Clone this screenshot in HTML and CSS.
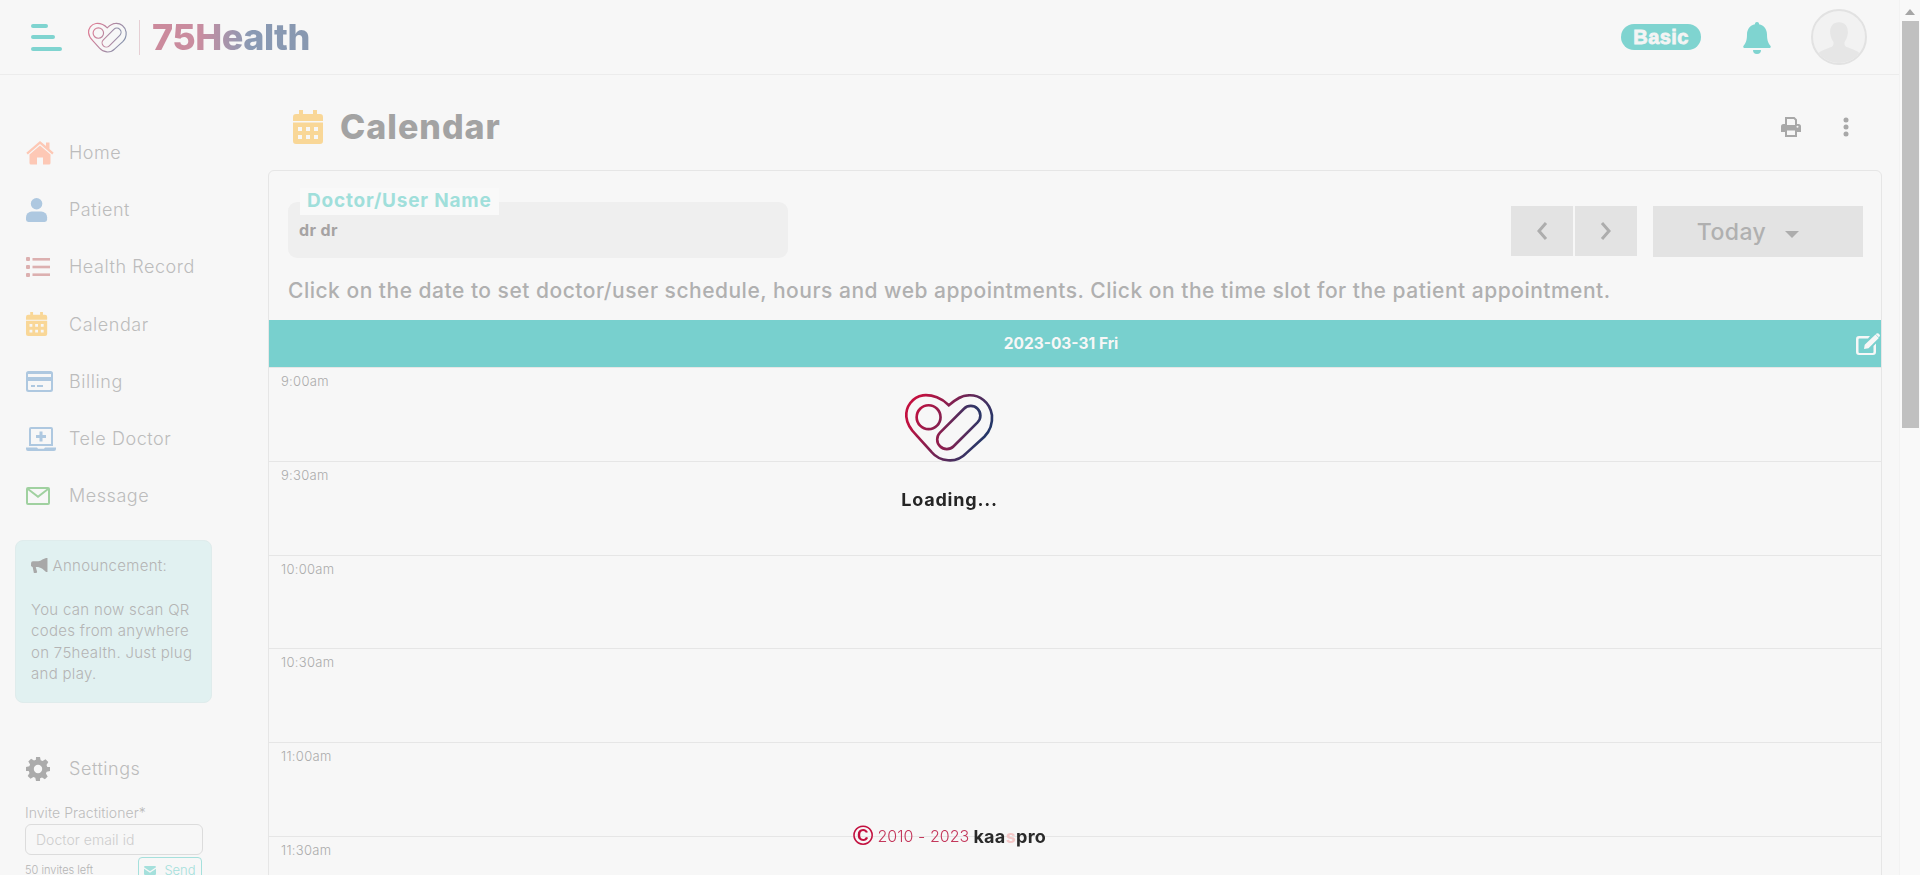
FILE: index.html
```html
<!DOCTYPE html>
<html lang="en">
<head>
<meta charset="utf-8">
<title>75Health - Calendar</title>
<link rel="stylesheet" href="styles.css">
</head>
<body>
<svg class="defs" width="0" height="0" aria-hidden="true">
  <defs>
    <linearGradient id="hg" gradientUnits="userSpaceOnUse" x1="170" y1="100" x2="390" y2="210">
      <stop offset="0" stop-color="#c2103f"/><stop offset="1" stop-color="#1b3a6b"/>
    </linearGradient>
    <symbol id="heart" viewBox="130 65 280 220">
      <g fill="none" stroke="url(#hg)" stroke-width="8">
        <path d="M268 105C248 84 218 72 190 75C158 80 137 110 140 140C142 165 155 180 170 195L215 245C240 275 290 282 320 250L375 200C395 180 400 160 398 135C392 95 360 72 325 75C305 75 285 90 268 105Z"/>
        <circle cx="207" cy="141" r="36"/>
        <rect x="218" y="143" width="160" height="58" rx="29" transform="rotate(-45 298 172)"/>
      </g>
    </symbol>
    <symbol id="cal" viewBox="0 0 30 34" preserveAspectRatio="xMinYMid meet">
      <path fill-rule="evenodd" d="M6 0h4v4h10V0h4v4h3a3 3 0 0 1 3 3v4H0V7a3 3 0 0 1 3-3h3ZM0 12.500h30V31a3 3 0 0 1-3 3H3a3 3 0 0 1-3-3ZM5 17v4h4v-4Zm8 0v4h4v-4Zm8 0v4h4v-4ZM5 25v4h4v-4Zm8 0v4h4v-4Zm8 0v4h4v-4Z"/>
    </symbol>
  </defs>
</svg>

<header class="topbar">
  <div class="hamburger"><span class="l1"></span><span class="l2"></span><span class="l3"></span></div>
  <svg class="brand-mark"><use href="#heart"/></svg>
  <span class="brand-sep"></span>
  <span class="brand-name">75Health</span>
  <div class="top-right">
    <span class="plan">Basic</span>
    <svg class="bell" viewBox="0 0 28 32"><path d="M14 0a2 2 0 0 1 2 2.300C21 3.300 24 7.500 24 12.500c0 7 2 9.500 3.400 11.200.6.700.6 2.300-1 2.300H1.600c-1.600 0-1.600-1.600-1-2.300C2 22 4 19.500 4 12.500 4 7.500 7 3.300 12 2.300A2 2 0 0 1 14 0ZM10 28h8a4 4 0 0 1-8 0Z"/></svg>
    <span class="avatar">
      <svg viewBox="0 0 56 56"><path d="M28 12c7 0 10 5 9.500 12-.3 4-2 7-3.500 9.500-.5 3 .5 4.500 3 5.500 6 2.300 11 3.500 14 7.500A26 26 0 0 1 5 46.500c3-4 8-5.200 14-7.500 2.500-1 3.500-2.500 3-5.500-1.500-2.500-3.200-5.500-3.500-9.500C18 17 21 12 28 12Z"/></svg>
    </span>
  </div>
</header>

<div class="shell">
  <aside class="sidebar">
    <nav class="nav">
      <a class="nav-item">
        <svg class="ic ic-home" viewBox="0 0 28 24" preserveAspectRatio="xMinYMid meet"><path d="M14 4.500 3.500 13.500V22a1.500 1.500 0 0 0 1.500 1.500h6v-7h6v7h6a1.500 1.500 0 0 0 1.500-1.500v-8.500ZM14 0 .3 11.700l1.500 1.800L14 3l12.200 10.500 1.500-1.800L23.500 8V1.500h-3.500v3.500Z"/></svg>
        <span>Home</span>
      </a>
      <a class="nav-item">
        <svg class="ic ic-user" viewBox="0 0 22 25" preserveAspectRatio="xMinYMid meet"><circle cx="11" cy="6" r="6"/><path d="M6 14h10a6 6 0 0 1 6 6v2.500a2.500 2.500 0 0 1-2.500 2.500h-17A2.500 2.500 0 0 1 0 22.500V20a6 6 0 0 1 6-6Z"/></svg>
        <span>Patient</span>
      </a>
      <a class="nav-item">
        <svg class="ic ic-list" viewBox="0 0 24 20" preserveAspectRatio="xMinYMid meet"><rect width="4" height="4" rx="1"/><rect y="8" width="4" height="4" rx="1"/><rect y="16" width="4" height="4" rx="1"/><rect x="6.500" y="1" width="17.500" height="2.600"/><rect x="6.500" y="8.700" width="17.500" height="2.600"/><rect x="6.500" y="16.400" width="17.500" height="2.600"/></svg>
        <span>Health Record</span>
      </a>
      <a class="nav-item">
        <svg class="ic ic-cal"><use href="#cal"/></svg>
        <span>Calendar</span>
      </a>
      <a class="nav-item">
        <svg class="ic ic-card" viewBox="0 0 27 21" preserveAspectRatio="xMinYMid meet"><path fill-rule="evenodd" d="M2.500 0h22A2.500 2.500 0 0 1 27 2.500v16a2.500 2.500 0 0 1-2.500 2.500h-22A2.500 2.500 0 0 1 0 18.500v-16A2.500 2.500 0 0 1 2.500 0ZM2 3v3h23V3ZM2 10v8a1 1 0 0 0 1 1h21a1 1 0 0 0 1-1v-8ZM5 14h4v2H5Zm6 0h6v2h-6Z"/></svg>
        <span>Billing</span>
      </a>
      <a class="nav-item">
        <svg class="ic ic-tele" viewBox="0 0 30 24" preserveAspectRatio="xMinYMid meet"><path fill-rule="evenodd" d="M5 0h20a2 2 0 0 1 2 2v17H3V2a2 2 0 0 1 2-2Zm0 2v15h20V2ZM13.500 4.500h3v3.500H20v3h-3.500v3.500h-3V11H10V8h3.500ZM0 20.500h11l1 1.300h6l1-1.300h11V22a2 2 0 0 1-2 2H2a2 2 0 0 1-2-2Z"/></svg>
        <span>Tele Doctor</span>
      </a>
      <a class="nav-item">
        <svg class="ic ic-msg" viewBox="0 0 24 18" preserveAspectRatio="xMinYMid meet"><path fill-rule="evenodd" d="M2 0h20a2 2 0 0 1 2 2v14a2 2 0 0 1-2 2H2a2 2 0 0 1-2-2V2a2 2 0 0 1 2-2Zm0 3.300V16h20V3.300l-10 7.800ZM3.500 2 12 8.500 20.500 2Z"/></svg>
        <span>Message</span>
      </a>
    </nav>

    <section class="announce">
      <p class="announce-head">
        <svg viewBox="0 0 18 16"><path d="M16 0h1.500v15H16l-4-3.500c-2-1.500-4-2-6-2H5l1.500 5.500-.8 1H3L1.700 9.500A2 2 0 0 1 0 7V5.500a2 2 0 0 1 2-2h4c2 0 4-.5 6-2Z"/></svg>
        Announcement:
      </p>
      <p>You can now scan QR codes from anywhere on 75health. Just plug and play.</p>
    </section>

    <a class="nav-item settings">
      <svg class="ic ic-cog" viewBox="0 0 24 24"><path fill-rule="evenodd" d="M10 0h4l.7 3.300 1.900.8 2.900-1.800 2.800 2.800-1.800 2.900.8 1.900L24 10v4l-3.300.7-.8 1.900 1.800 2.900-2.800 2.800-2.900-1.800-1.900.8L14 24h-4l-.7-3.300-1.900-.8-2.900 1.800-2.800-2.800 1.800-2.900-.8-1.900L0 14v-4l3.300-.7.8-1.900-1.800-2.900 2.800-2.800 2.900 1.800 1.900-.8ZM12 7.800a4.200 4.200 0 1 0 0 8.400 4.200 4.200 0 0 0 0-8.400Z"/></svg>
      <span>Settings</span>
    </a>

    <form class="invite">
      <label class="invite-label">Invite Practitioner*</label>
      <div class="invite-input">Doctor email id</div>
      <div class="invite-foot">
        <span class="invite-left">50 invites left</span>
        <span class="send">
          <svg viewBox="0 0 16 12"><path d="M0 1.500A1.500 1.500 0 0 1 1.500 0h13A1.500 1.500 0 0 1 16 1.500L8 7 0 1.500ZM0 3.500V10.500A1.500 1.500 0 0 0 1.500 12h13a1.500 1.500 0 0 0 1.500-1.500v-7L8 9Z"/></svg>
          Send
        </span>
      </div>
    </form>
  </aside>

  <main class="content">
    <div class="page-head">
      <svg class="page-ic"><use href="#cal"/></svg>
      <h1>Calendar</h1>
      <div class="page-tools">
        <svg class="print" viewBox="0 0 20 20"><path fill-rule="evenodd" d="M4 0h9.500L16 2.500V7h1.500A2.500 2.500 0 0 1 20 9.500V15h-4v5H4v-5H0V9.500A2.500 2.500 0 0 1 2.500 7H4Zm2 2v6h8V3.300L12.700 2ZM6 13.500V18h8v-4.500Zm10.500-4.700a1 1 0 1 0 0 2 1 1 0 0 0 0-2Z"/></svg>
        <svg class="kebab" viewBox="0 0 6 20"><circle cx="3" cy="3" r="2.500"/><circle cx="3" cy="10" r="2.500"/><circle cx="3" cy="17" r="2.500"/></svg>
      </div>
    </div>

    <section class="card">
      <div class="card-top">
        <div class="toolbar">
          <div class="field">
            <span class="field-label">Doctor/User Name</span>
            <span class="field-value">dr dr</span>
          </div>
          <div class="controls">
            <button class="btn btn-nav" type="button"><svg viewBox="0 0 12 20"><path d="M10 2 3 10l7 8" /></svg></button>
            <button class="btn btn-nav" type="button"><svg viewBox="0 0 12 20"><path d="m2 2 7 8-7 8" /></svg></button>
            <button class="btn btn-today" type="button">Today <span class="caret"></span></button>
          </div>
        </div>
        <p class="hint">Click on the date to set doctor/user schedule, hours and web appointments. Click on the time slot for the patient appointment.</p>
      </div>

      <div class="date-bar">
        <span>2023-03-31 Fri</span>
        <svg class="edit" viewBox="0 0 24 22"><path fill-rule="evenodd" d="M3 3h11l-2 2.400H3.500a1 1 0 0 0-1 1V19a1 1 0 0 0 1 1h13a1 1 0 0 0 1-1v-6l2.500-2.500V19a3 3 0 0 1-3 3H3a3 3 0 0 1-3-3V6a3 3 0 0 1 3-3Z"/><path d="M19.500 1.500 22.800 5 12.500 15.300 8 16l.7-4.300ZM20.500.6a1.500 1.500 0 0 1 2 0l1 1a1.500 1.500 0 0 1 0 2l-.7.700-3-3Z"/></svg>
      </div>

      <div class="slots">
        <div class="slot">9:00am</div>
        <div class="slot">9:30am</div>
        <div class="slot">10:00am</div>
        <div class="slot">10:30am</div>
        <div class="slot">11:00am</div>
        <div class="slot">11:30am</div>
      </div>
    </section>
  </main>
</div>

<div class="loader">
  <svg class="loader-mark"><use href="#heart"/></svg>
  <strong>Loading...</strong>
</div>

<footer class="copy">
  <span class="copy-mark">©</span>
  <span>2010 - 2023</span>
  <b>kaa<i>s</i>pro</b>
</footer>

<div class="scrollbar" aria-hidden="true">
  <span class="scroll-arrow"></span>
  <span class="scroll-thumb"></span>
</div>
</body>
</html>
```

FILE: styles.css
```css
* { box-sizing: border-box; }

html { background: #f7f7f7; overflow: hidden; }

body {
  margin: 0;
  padding-right: 21px;
  font-family: Inter, "Open Sans", "Liberation Sans", sans-serif;
  color: #b8b8b8;
  background: #f7f7f7;
}

.defs { position: absolute; }

/* window scrollbar */
.scrollbar {
  position: fixed;
  top: 0; right: 0; bottom: 0;
  width: 21px;
  padding: 9px 2px 0;
  background: #f9f9f9;
  border-left: 1px solid #f2f2f2;
  display: flex;
  flex-direction: column;
  align-items: center;
}
.scroll-arrow {
  width: 0; height: 0;
  border: 5px solid transparent;
  border-top: 0;
  border-bottom: 6px solid #a6a6a6;
  margin-bottom: 6px;
}
.scroll-thumb { width: 17px; height: 407px; background: #c0c0c0; }

/* top bar */
.topbar {
  height: 75px;
  display: flex;
  align-items: center;
  padding: 0 32px 0 31px;
  border-bottom: 1px solid #ececec;
}
.hamburger { width: 31px; display: flex; flex-direction: column; gap: 7.500px; margin-right: 25px; }
.hamburger span { display: block; height: 4px; border-radius: 2px; background: #7fd4d0; }
.hamburger .l1 { width: 17px; }
.hamburger .l2 { width: 24px; }
.hamburger .l3 { width: 31px; }
.brand-mark { width: 41px; height: 32px; opacity: .52; margin-top: 1px; }
.brand-sep { width: 1px; height: 35px; background: #e6cfd4; margin: 0 12px 0 11px; }
.brand-name {
  font-size: 36px;
  line-height: 1;
  font-weight: 800;
  letter-spacing: -.5px;
  background: linear-gradient(90deg, #cc8a9c 0%, #c98da0 30%, #8a9ab4 62%, #8898b0 100%);
  -webkit-background-clip: text;
  background-clip: text;
  color: transparent;
}
.top-right { margin-left: auto; display: flex; align-items: center; }
.plan {
  width: 80px; height: 26px;
  display: flex; align-items: center; justify-content: center;
  border-radius: 13px;
  background: #7fd4d0;
  color: #f4f4f4;
  font-family: "Liberation Sans", sans-serif;
  font-size: 20px;
  font-weight: 700;
  letter-spacing: .4px;
  -webkit-text-stroke: .8px #f4f4f4;
}
.bell { width: 28px; height: 32px; fill: #7fd4d0; margin: 1px 40px 0 42px; }
.avatar {
  width: 56px; height: 56px;
  border-radius: 50%;
  border: 2px solid #e2e2e2;
  background: #f2f2f2;
  overflow: hidden;
  display: block;
}
.avatar svg { width: 100%; height: 100%; display: block; fill: #e6e6e6; }

/* layout */
.shell { display: flex; align-items: flex-start; }
.sidebar { width: 268px; flex: none; padding-top: 49px; }
.content { flex: 1; min-width: 0; padding-right: 17px; }

/* nav */
.nav-item {
  height: 57.200px;
  display: flex;
  align-items: center;
  padding-left: 26px;
  font-size: 18px;
  font-weight: 300;
  letter-spacing: .55px;
  color: #bcbcbc;
}
.nav-item .ic { flex: none; margin-right: 15px; }
.ic { width: 28px; height: 24px; }
.ic-home { fill: #fdc8b5; }
.ic-user { fill: #aec8e0; height: 24px; }
.ic-list { fill: #dcb0b0; height: 20px; }
.ic-cal { fill: #f9d797; height: 24px; }
.ic-card { fill: #aec8e0; height: 21px; }
.ic-tele { fill: #aec8e0; width: 30px; margin-right: 13px !important; }
.ic-msg { fill: #a0d1a0; height: 18px; }
.ic-cog { fill: #ababab; width: 24px; margin-right: 19px !important; }

/* announcement */
.announce {
  width: 197px;
  height: 163px;
  margin: 16px 0 37px 15px;
  padding: 14px 15px;
  background: #e1f1f1;
  border: 1px solid #dfecec;
  border-radius: 8px;
  font-size: 15px;
  font-weight: 300;
  line-height: 21.500px;
  letter-spacing: .3px;
  color: #b4b4b4;
}
.announce p { margin: 0; }
.announce-head { margin-bottom: 22px !important; }
.announce-head svg { width: 17px; height: 15px; fill: #a8a8a8; vertical-align: -2px; }

.settings { height: 57px; }

/* invite */
.invite { padding: 0 65px 0 25px; margin-top: 6px; }
.invite-label { display: block; font-size: 14px; line-height: 20px; font-weight: 300; letter-spacing: .05px; color: #bcbcbc; }
.invite-input {
  height: 31px;
  margin-top: 1px;
  padding-left: 10px;
  border: 1px solid #dcdcdc;
  border-radius: 6px;
  font-size: 14px;
  line-height: 29px;
  font-weight: 300;
  letter-spacing: .05px;
  color: #cdcdcd;
}
.invite-foot { display: flex; justify-content: space-between; align-items: flex-start; margin-top: 2px; }
.invite-left { font-size: 11px; line-height: 14px; font-weight: 300; color: #b4b4b4; margin-top: 6px; }
.send {
  width: 64px; height: 26px;
  display: flex; align-items: center; justify-content: center; gap: 8px;
  margin-right: 1px;
  border: 1px solid #a5e0dc;
  border-radius: 4px;
  font-size: 13px;
  font-weight: 300;
  color: #a5e0dc;
}
.send svg { width: 12px; height: 9px; fill: #a5e0dc; flex: none; }

/* page head */
.page-head {
  height: 95px;
  display: flex;
  align-items: center;
  padding: 8px 33px 0 25px;
}
.page-ic { width: 30px; height: 34px; fill: #f9d797; flex: none; margin-right: 17px; }
.page-head h1 { margin: 0; font-size: 34px; font-weight: 800; letter-spacing: 1px; color: #a3a3a3; }
.page-tools { margin-left: auto; display: flex; align-items: center; gap: 42px; }
.print { width: 20px; height: 20px; fill: #a8a8a8; }
.kebab { width: 6px; height: 20px; fill: #a8a8a8; }

/* card */
.card {
  border: 1px solid #e6e6e6;
  border-radius: 6px 6px 0 0;
}
.card-top { padding: 31px 18px 0 19px; height: 149px; }
.toolbar { display: flex; justify-content: space-between; align-items: flex-start; }
.field {
  position: relative;
  width: 500px;
  height: 56px;
  padding: 19px 11px 0;
  background: #efefef;
  border-radius: 9px;
}
.field-label {
  position: absolute;
  left: 12px; top: -14px;
  padding: 0 7px;
  height: 27px;
  line-height: 26px;
  background: #f9f9f9;
  color: #a0dfdb;
  font-size: 19px;
  font-weight: 700;
  letter-spacing: .8px;
  white-space: nowrap;
}
.field-value { font-size: 16px; line-height: 18px; font-weight: 700; letter-spacing: .4px; color: #a6a3a3; display: block; }
.controls { display: flex; margin-top: 4px; align-items: flex-start; }
.btn {
  border: 0;
  padding: 0;
  background: #e3e3e3;
  color: #b0b0b0;
  font-family: inherit;
  display: flex;
  align-items: center;
  justify-content: center;
}
.btn-nav { width: 62px; height: 50px; margin-right: 2px; }
.btn-nav:nth-child(2) { margin-right: 16px; }
.btn-nav svg { width: 12px; height: 20px; fill: none; stroke: #adadad; stroke-width: 3; }
.btn-today { width: 210px; height: 51px; padding-right: 20px; font-size: 23px; font-weight: 500; letter-spacing: .4px; }
.caret {
  width: 0; height: 0;
  margin: 6px 0 0 19px;
  border: 7px solid transparent;
  border-top-color: #adadad;
  border-bottom: 0;
}
.hint {
  margin: 21px 0 0;
  font-size: 21px;
  line-height: 24px;
  font-weight: 500;
  letter-spacing: .5px;
  color: #b0b0b0;
  white-space: nowrap;
}

/* date bar */
.date-bar {
  position: relative;
  height: 48px;
  padding-right: 28px;
  display: flex;
  align-items: center;
  justify-content: center;
  background: #78d0ce;
  color: #f7f7f7;
  font-size: 15.500px;
  font-weight: 700;
  border-bottom: 1px solid #e6e6e6;
}
.edit { position: absolute; right: 1px; top: 13px; width: 24px; height: 22px; fill: #f7f7f7; }

/* slots */
.slot {
  height: 93.800px;
  padding: 5px 0 0 12px;
  border-bottom: 1px solid #e6e6e6;
  font-size: 13px;
  line-height: 16px;
  font-weight: 300;
  letter-spacing: .3px;
  color: #ababab;
}

/* overlay items */
.loader {
  position: fixed;
  left: 0; right: 21px; top: 392px;
  display: flex;
  flex-direction: column;
  align-items: center;
}
.loader-mark { width: 93px; height: 73px; }
.loader strong { margin-top: 24px; font-size: 18px; line-height: 22px; font-weight: 700; letter-spacing: .8px; color: #252525; }

.copy {
  position: fixed;
  left: 0; right: 21px; top: 824px;
  display: flex;
  align-items: center;
  justify-content: center;
  gap: 4px;
  height: 24px;
  font-size: 16px;
  font-weight: 300;
  letter-spacing: .05px;
  color: #c4385c;
}
.copy-mark { font-size: 28px; line-height: 24px; font-weight: 700; color: #c2103f; font-family: "Liberation Sans", sans-serif; }
.copy b { font-size: 18px; font-weight: 700; letter-spacing: .3px; color: #2a2a2a; }
.copy i { font-style: normal; color: #f3c7c7; }
```
